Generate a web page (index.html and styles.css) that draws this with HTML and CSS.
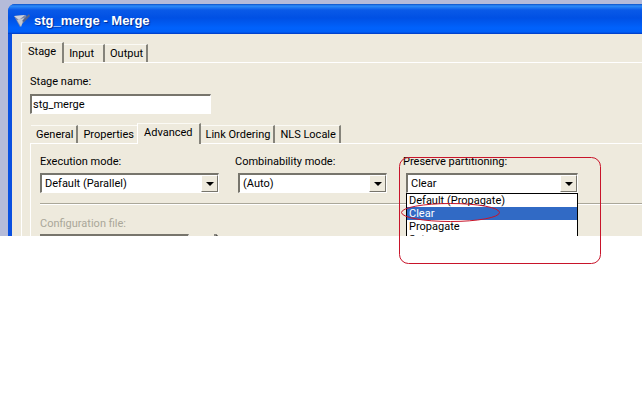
FILE: index.html
```html
<!DOCTYPE html>
<html lang="en">
<head>
    <meta charset="UTF-8">
    <meta name="viewport" content="width=device-width, initial-scale=1.0">
    <title>stg_merge - Merge</title>
    <link rel="stylesheet" href="styles.css">
</head>
<body>
    <div class="desktop">
        <div class="window">
            <header class="titlebar">
                <svg class="app-icon" width="16" height="16" viewBox="0 0 16 16">
                    <path d="M0 3l12-1 1 3-7 9z" fill="#7886a8"/>
                    <path d="M0 3l11-1-6 5z" fill="#cdd2de"/>
                    <path d="M3 7l7-2-3 9z" fill="#c3c8d2"/>
                    <path d="M8 8l7-7 1 2-6 6z" fill="#54648a"/>
                </svg>
                <h1>stg_merge - Merge</h1>
            </header>
            <main class="window-body">
                <nav class="tabs">
                    <button class="tab active">Stage</button>
                    <button class="tab tab-input">Input</button>
                    <button class="tab">Output</button>
                </nav>
                <div class="panel stage-panel">
                    <div class="stage-name">
                        <label for="stageName">Stage name:</label>
                        <input type="text" id="stageName" value="stg_merge">
                    </div>
                    <nav class="tabs inner-tabs">
                        <button class="tab">General</button>
                        <button class="tab tab-properties">Properties</button>
                        <button class="tab active">Advanced</button>
                        <button class="tab">Link Ordering</button>
                        <button class="tab">NLS Locale</button>
                    </nav>
                    <div class="panel advanced-panel">
                        <div class="modes">
                            <div class="field">
                                <label for="execution">Execution mode:</label>
                                <div class="combo">
                                    <select id="execution"><option>Default (Parallel)</option></select>
                                    <span class="arrow"></span>
                                </div>
                            </div>
                            <div class="field field-combinability">
                                <label for="combinability">Combinability mode:</label>
                                <div class="combo">
                                    <select id="combinability"><option>(Auto)</option></select>
                                    <span class="arrow"></span>
                                </div>
                            </div>
                            <div class="field field-preserve">
                                <label for="preserve">Preserve partitioning:</label>
                                <div class="combo">
                                    <select id="preserve"><option>Clear</option></select>
                                    <span class="arrow"></span>
                                    <ul class="options">
                                        <li>Default (Propagate)</li>
                                        <li class="selected">Clear</li>
                                        <li>Propagate</li>
                                        <li>Set</li>
                                    </ul>
                                </div>
                            </div>
                        </div>
                        <hr>
                        <div class="config">
                            <label for="config">Configuration file:</label>
                            <div class="config-row">
                                <input type="text" id="config" disabled>
                                <svg width="8" height="8" viewBox="0 0 8 8">
                                    <path d="M1 1h3v2h2" fill="none" stroke="#222" stroke-width="1"/>
                                </svg>
                            </div>
                        </div>
                    </div>
                </div>
            </main>
        </div>
    </div>
    <svg class="marks" width="204" height="110" viewBox="0 0 204 110">
        <rect x="1.5" y="2.5" width="201" height="106" rx="9"/>
        <ellipse cx="52.5" cy="57.5" rx="49" ry="9"/>
    </svg>
</body>
</html>
```
FILE: styles.css
```css
* {
    box-sizing: border-box;
}
body {
    margin: 0;
    background-color: #fff;
    color: #000;
    font-family: Roboto, "Liberation Sans", Arial, sans-serif;
    font-size: 11px;
    line-height: 14px;
}
.desktop {
    height: 236px;
    padding: 4px 0 0 8px;
    overflow: hidden;
    background-color: #b5bbd9;
}
.window {
    background-color: #0a50e0;
    border-top-left-radius: 7px;
    overflow: hidden;
    padding-left: 4px;
}
.titlebar {
    display: flex;
    align-items: center;
    gap: 4px;
    height: 30px;
    margin-left: -4px;
    padding: 4px 0 0 6px;
    background: linear-gradient(#0b50c8 0, #2e8cf8 2px, #0a5ae8 6px, #0050e4 14px, #0062fc 24px, #0060f8 28px, #0038c0 30px);
}
h1 {
    margin: 0;
    color: #fff;
    font-family: "Liberation Sans", Arial, sans-serif;
    font-size: 13px;
    line-height: 16px;
    text-shadow: 1px 1px 1px #002a90;
}
.window-body {
    padding: 8px 0 0 9px;
    background-color: #eeeadd;
}
.tabs {
    display: flex;
    align-items: flex-end;
}
.tab {
    height: 18px;
    padding: 0 3px 0 5px;
    border: 0;
    border-top: 1px solid #fbfaf5;
    border-right: 2px solid #85837a;
    background-color: #eeeadd;
    color: #000;
    font: inherit;
}
.tab.active {
    height: 21px;
    margin-bottom: -1px;
    padding: 0 6px 3px;
    border-left: 1px solid #fff;
    position: relative;
}
.tab-input {
    padding-right: 9px;
}
.tab-properties {
    border-right: 0;
}
.panel {
    border-top: 1px solid #fff;
    border-left: 1px solid #fff;
}
.stage-panel {
    padding: 12px 0 0 8px;
}
label {
    display: block;
}
input, select {
    display: block;
    width: 100%;
    height: 20px;
    padding: 0 3px;
    border: 1px solid #fff;
    border-top: 2px solid #77756c;
    border-left: 2px solid #77756c;
    border-radius: 0;
    background-color: #fff;
    color: #000;
    font: inherit;
    appearance: none;
}
.stage-name {
    width: 181px;
}
.stage-name input {
    margin-top: 5px;
    padding: 0 1px;
}
.inner-tabs {
    margin-top: 9px;
    padding-left: 1px;
}
.advanced-panel {
    padding: 11px 0 0 9px;
}
.modes {
    display: flex;
    gap: 16px;
}
.field {
    width: 179px;
}
.field-combinability {
    width: 152px;
}
.field-preserve {
    width: 175px;
}
.combo {
    position: relative;
    margin-top: 4px;
}
.field-combinability .combo, .field-preserve .combo {
    margin-left: 3px;
}
.arrow {
    position: absolute;
    top: 2px;
    right: 1px;
    display: flex;
    align-items: center;
    justify-content: center;
    width: 17px;
    height: 17px;
    border: 1px solid #fff;
    border-right-color: #77756c;
    border-bottom-color: #77756c;
    background-color: #eeeadd;
    pointer-events: none;
}
.arrow::before {
    content: "";
    border: 4px solid transparent;
    border-top-color: #000;
    border-bottom: 0;
}
.options {
    position: absolute;
    top: 100%;
    left: 0;
    width: 100%;
    margin: 0;
    padding: 0;
    border: 1px solid #000;
    background-color: #fff;
    list-style: none;
}
.options li {
    padding-left: 2px;
    line-height: 13px;
}
.options .selected {
    background-color: #316ac5;
    color: #fff;
}
hr {
    height: 2px;
    margin: 10px 0 12px;
    border: 0;
    border-top: 1px solid #aaa799;
    border-bottom: 1px solid #fff;
}
.config label {
    color: #aaa799;
}
.config-row {
    display: flex;
    gap: 24px;
    margin-top: 3px;
}
.config input {
    width: 149px;
    background-color: #eeeadd;
}
.marks {
    position: absolute;
    top: 155px;
    left: 398px;
    fill: none;
    stroke: #c8142a;
    stroke-width: 1;
    pointer-events: none;
}
```
